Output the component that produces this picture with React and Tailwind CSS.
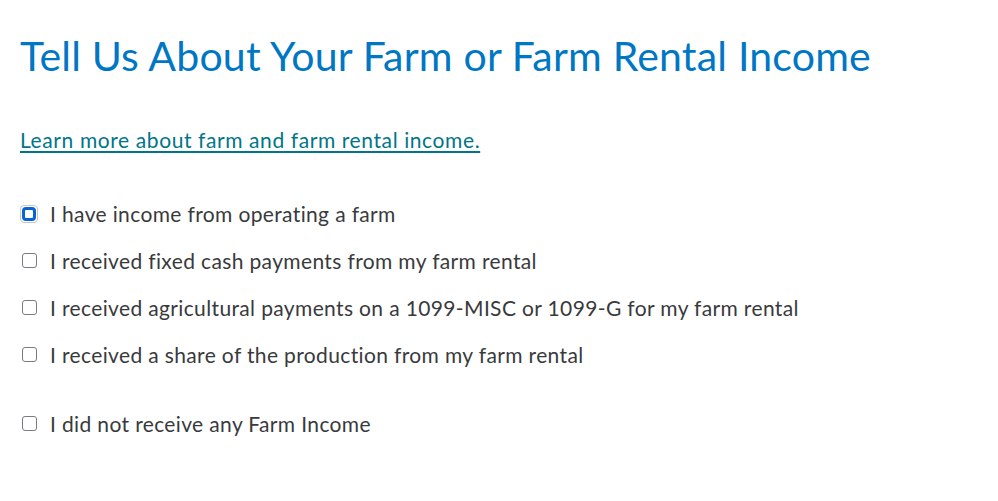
import React from "react";

const options = [
  "I have income from operating a farm",
  "I received fixed cash payments from my farm rental",
  "I received agricultural payments on a 1099-MISC or 1099-G for my farm rental",
  "I received a share of the production from my farm rental",
];

function Box({ focused }) {
  if (focused) {
    return (
      <span className="relative flex h-[18px] w-[18px] shrink-0 items-center justify-center rounded-[4px] border border-[#c7c7c7]">
        <span className="h-[14px] w-[14px] rounded-[4px] border-[3px] border-[#0a63d6] bg-white" />
      </span>
    );
  }
  return (
    <span className="flex h-[18px] w-[18px] shrink-0 items-center justify-center">
      <span className="h-[15px] w-[15px] rounded-[3px] border border-[#7a7b80] bg-white" />
    </span>
  );
}

function Row({ label, focused }) {
  return (
    <label className="flex h-[47px] items-center gap-[12px]">
      <Box focused={focused} />
      <span className="text-[21px] tracking-[0.36px] text-[#393a3d]">{label}</span>
    </label>
  );
}

export default function App() {
  return (
    <div
      className="min-h-[501px] w-[998px] bg-white pl-[20px]"
      style={{ fontFamily: "Lato, 'Noto Sans', sans-serif" }}
    >
      <h1 className="pt-[31px] text-[41px] font-normal leading-[50px] tracking-[0.2px] text-[#0077c5]">
        Tell Us About Your Farm or Farm Rental Income
      </h1>
      <a
        href="#"
        className="mt-[47px] inline-block text-[21px] leading-[24px] tracking-[0.6px] text-[#00758a] underline decoration-[1.5px] underline-offset-[3px]"
      >
        Learn more about farm and farm rental income.
      </a>
      <div className="mt-[36px] flex flex-col">
        {options.map((o, i) => (
          <Row key={o} label={o} focused={i === 0} />
        ))}
        <div className="mt-[22px]">
          <Row label="I did not receive any Farm Income" />
        </div>
      </div>
    </div>
  );
}
